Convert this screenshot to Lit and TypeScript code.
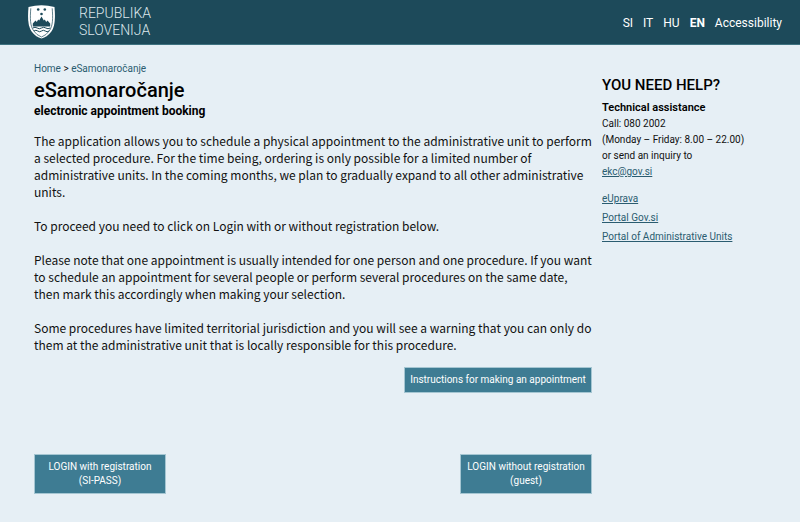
import { LitElement, html, css } from "lit";
import { customElement } from "lit/decorators.js";

const languages = ["SI", "IT", "HU", "EN"];
const portals = ["eUprava", "Portal Gov.si", "Portal of Administrative Units"];

@customElement("app-root")
export class AppRoot extends LitElement {
  static styles = css`
    :host {
      display: block;
      min-height: 100vh;
      background: #e6eff5;
      color: #111;
      font-family: Roboto, "Noto Sans", sans-serif;
      font-size: 12px;
      line-height: 17px;
    }
    h1, h2, h3, p, ul { margin: 0; padding: 0; }
    ul { list-style: none; }
    .header {
      display: flex;
      align-items: center;
      justify-content: space-between;
      height: 44px;
      padding: 0 18px 0 28px;
      background: #1d4a5a;
      border-bottom: 1px solid #3e7280;
      color: #fff;
    }
    .brand {
      display: flex;
      align-items: center;
      gap: 24px;
      margin-top: -1px;
      color: #dce7ec;
      text-decoration: none;
      font-size: 14px;
      font-weight: 300;
    }
    .crest { display: block; width: 27px; height: 34px; }
    .languages { display: flex; gap: 10px; padding-top: 2px; }
    .languages a { color: #fff; text-decoration: none; }
    .languages .current { font-weight: 700; }
    .page {
      display: grid;
      grid-template-columns: minmax(0, 1fr) 164px;
      gap: 10px;
      padding: 16px 34px 24px;
    }
    a { color: #2a5c70; }
    .crumbs { font-size: 10px; line-height: 16px; }
    .crumbs a { text-decoration: none; }
    h1 { font-size: 20px; line-height: 26px; font-weight: 500; color: #000; }
    h2 { font-size: 12px; line-height: 17px; font-weight: 700; color: #000; }
    .text {
      display: grid;
      gap: 17px;
      margin-top: 12px;
      font-family: "Noto Sans CJK SC", "Noto Sans", sans-serif;
    }
    button {
      font: inherit;
      font-size: 10px;
      line-height: 14px;
      color: #fff;
      background: #3e7c93;
      border: 1px solid #a5c6d2;
      padding: 5px 4px;
      white-space: nowrap;
    }
    .instructions { display: flex; justify-content: flex-end; margin-top: 14px; }
    .instructions button { min-width: 188px; }
    .logins { display: flex; justify-content: space-between; margin-top: 61px; }
    .logins button { min-width: 132px; }
    .aside { padding-top: 14px; font-size: 10px; line-height: 16px; }
    .aside h2 { font-size: 15px; line-height: 20px; font-weight: 500; }
    .aside h3 { margin-top: 5px; font-size: 11px; line-height: 16px; font-weight: 600; color: #000; }
    .portals { margin-top: 9px; line-height: 19px; }
  `;

  render() {
    return html`
      <header class="header">
        <a class="brand" href="#">
          <svg class="crest" viewBox="0 0 27 34" aria-hidden="true">
            <path d="M.5 2Q13.500 -1.500 26.500 2C27.500 13 27 22 23 27Q19 32 13.500 33.500Q8 32 4 27C0 22 -.5 13 .5 2Z" fill="#fff"/>
            <path d="M2.800 3.300C2 13 2 21 5.800 26Q8.500 30 13.500 32M24.200 3.300C25 13 25 21 21.200 26Q18.500 30 13.500 32" fill="none" stroke="#1d4a5a" stroke-width=".7"/>
            <g fill="#1d4a5a">
              <circle cx="10.200" cy="4.500" r="1.300"/><circle cx="16.800" cy="4.500" r="1.300"/><circle cx="13.500" cy="9" r="1.300"/>
              <path d="M4.800 21.500V18.500L7.500 15.500L8.800 17L10.200 14.500L11.200 15.500L13.500 11.500L15.800 15.500L16.800 14.500L18.200 17L19.500 15.500L22.200 18.500V21.500Z"/>
            </g>
            <path d="M4.800 23q2.200 -1.500 4.350 0t4.350 0t4.350 0t4.350 0M6 26q1.900 -1.500 3.750 0t3.750 0t3.750 0t3.750 0" fill="none" stroke="#1d4a5a" stroke-width="1"/>
          </svg>
          <span>REPUBLIKA<br />SLOVENIJA</span>
        </a>
        <nav class="languages" aria-label="Language">
          ${languages.map((l) => html`<a href="#" class=${l === "EN" ? "current" : ""}>${l}</a>`)}
          <a href="#">Accessibility</a>
        </nav>
      </header>
      <div class="page">
        <main>
          <nav class="crumbs" aria-label="Breadcrumb"><a href="#">Home</a> &gt; <a href="#">eSamonaročanje</a></nav>
          <h1>eSamonaročanje</h1>
          <h2>electronic appointment booking</h2>
          <div class="text">
            <p>The application allows you to schedule a physical appointment to the administrative unit to perform a selected procedure. For the time being, ordering is only possible for a limited number of administrative units. In the coming months, we plan to gradually expand to all other administrative units.</p>
            <p>To proceed you need to click on Login with or without registration below.</p>
            <p>Please note that one appointment is usually intended for one person and one procedure. If you want to schedule an appointment for several people or perform several procedures on the same date, then mark this accordingly when making your selection.</p>
            <p>Some procedures have limited territorial jurisdiction and you will see a warning that you can only do them at the administrative unit that is locally responsible for this procedure.</p>
          </div>
          <div class="instructions"><button type="button">Instructions for making an appointment</button></div>
          <div class="logins">
            <button type="button">LOGIN with registration<br />(SI-PASS)</button>
            <button type="button">LOGIN without registration<br />(guest)</button>
          </div>
        </main>
        <aside class="aside">
          <h2>YOU NEED HELP?</h2>
          <h3>Technical assistance</h3>
          <p>Call: 080 2002<br />(Monday – Friday: 8.00 – 22.00)<br />or send an inquiry to<br /><a href="#">ekc@gov.si</a></p>
          <ul class="portals">${portals.map((p) => html`<li><a href="#">${p}</a></li>`)}</ul>
        </aside>
      </div>
    `;
  }
}
